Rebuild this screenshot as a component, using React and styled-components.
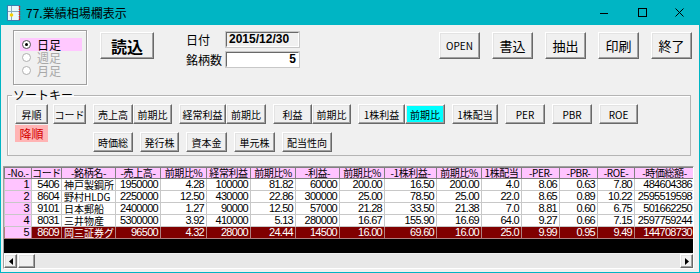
import React from "react";
import styled, { createGlobalStyle, css } from "styled-components";

const jp = `"Noto Sans CJK JP", sans-serif`;
const num = `"Liberation Sans Narrow", "Liberation Sans", "Noto Sans CJK JP", sans-serif`;
const teal = "#00b5c4";

const GlobalStyle = createGlobalStyle`
  body {
    margin: 0;
    font-family: ${jp};
    background: #f0f0f0;
  }
`;

const raised = css`
  border: 1px solid;
  border-color: #fff #696969 #696969 #fff;
  box-shadow: inset -1px -1px 0 #a0a0a0, inset 1px 1px 0 #e3e3e3;
  background: #f0f0f0;
`;

const Window = styled.div`
  width: 700px;
  height: 273px;
  box-sizing: border-box;
  border: 1px solid ${teal};
  border-top: none;
  display: flex;
  flex-direction: column;
  overflow: hidden;
`;

const TitleBar = styled.div`
  height: 25px;
  flex: none;
  background: ${teal};
  display: flex;
  align-items: center;
  padding-left: 6px;
  font-size: 12px;
  color: #000;
`;

const TitleText = styled.span`
  margin-left: 5px;
  line-height: 1;
`;

const Controls = styled.div`
  margin-left: auto;
  display: flex;
  height: 100%;
`;

const Ctrl = styled.div`
  width: 37.5px;
  display: flex;
  align-items: center;
  justify-content: center;
`;

const Body = styled.div`
  flex: 1;
  background: #f0f0f0;
  padding-top: 5px;
  display: flex;
  flex-direction: column;
  min-height: 0;
`;

const TopRow = styled.div`
  display: flex;
  align-items: flex-start;
  height: 55px;
  flex: none;
`;

const RadioGroup = styled.div`
  margin-left: 12px;
  width: 74px;
  height: 55px;
  box-sizing: border-box;
  border: 1px solid #a0a0a0;
  box-shadow: inset 1px 1px 0 #fff, 1px 1px 0 #fff;
  padding: 7px 0 0 6px;
`;

const RadioItem = styled.div`
  width: 62px;
  height: 13px;
  display: flex;
  align-items: center;
  font-size: 12px;
  line-height: 13px;
  color: ${(p) => (p.$on ? "#000" : "#a8a8a8")};
  background: ${(p) => (p.$on ? "#ffc8ff" : "transparent")};
`;

const Dot = styled.span`
  width: 7px;
  height: 7px;
  margin: 0 6px 0 2px;
  border-radius: 50%;
  border: 1px solid ${(p) => (p.$on ? "#555" : "#b0b0b0")};
  background: #fff;
  display: flex;
  align-items: center;
  justify-content: center;
  &::after {
    content: "";
    width: 3px;
    height: 3px;
    border-radius: 50%;
    background: ${(p) => (p.$on ? "#000" : "transparent")};
  }
`;

const Button = styled.button`
  ${raised};
  width: ${(p) => p.$w || 41}px;
  height: 27px;
  margin-top: 2px;
  padding: 0;
  font-family: ${jp};
  font-size: ${(p) => p.$fs || 12}px;
  font-weight: ${(p) => (p.$bold ? 700 : 400)};
  color: #000;
`;

const LoadBtn = styled(Button)`
  margin-left: 13px;
`;

const Info = styled.div`
  margin-left: 32px;
  margin-top: 2px;
  display: grid;
  grid-template-columns: 40px 73px;
  row-gap: 5px;
  align-items: center;
`;

const Label = styled.span`
  font-size: 12px;
  line-height: 14px;
`;

const Field = styled.div`
  height: 15px;
  box-sizing: border-box;
  border-top: 1px solid #696969;
  border-left: 1px solid #696969;
  border-right: 1px solid #fff;
  border-bottom: 1px solid #fff;
  outline: 1px solid #c8c8c8;
  background: ${(p) => (p.$white ? "#fff" : "#f0f0f0")};
  font-family: "Liberation Sans", sans-serif;
  font-weight: 700;
  font-size: 12px;
  line-height: 13px;
  padding: 0 2px;
  text-align: ${(p) => (p.$right ? "right" : "left")};
`;

const RightBtns = styled.div`
  margin-left: auto;
  margin-right: 7px;
  display: flex;
  gap: 12px;
`;

const SortGroup = styled.fieldset`
  margin: 3px 8px 0 6px;
  padding: 2px 7px 3px 7px;
  border: 1px solid #b4b4b4;
  box-shadow: 1px 1px 0 #fff inset;
  display: flex;
  gap: 5px;
  flex: none;
`;

const Legend = styled.legend`
  font-size: 12px;
  line-height: 14px;
  padding: 0 1px;
  margin-left: -3px;
`;

const OrderCol = styled.div`
  display: flex;
  flex-direction: column;
  gap: 1px;
`;

const KeyArea = styled.div`
  display: flex;
  flex-direction: column;
`;

const KeyRow = styled.div`
  display: flex;
  gap: 7px;
  margin-left: ${(p) => p.$indent || 0}px;
  margin-top: ${(p) => p.$top || 0}px;
`;

const Pair = styled.div`
  display: flex;
`;

const SortBtn = styled.button`
  ${raised};
  width: ${(p) => p.$w}px;
  height: 20px;
  padding: 0;
  font-family: ${jp};
  font-size: 10px;
  color: #000;
  white-space: nowrap;
  overflow: hidden;
  background: ${(p) => (p.$active ? "#00ffff" : "#f0f0f0")};
`;

const DescBtn = styled.div`
  width: 33px;
  height: 17px;
  background: #ffb4b4;
  color: #d40000;
  font-size: 12px;
  line-height: 17px;
  text-align: center;
`;

const GridBox = styled.div`
  margin: 10px 5px 3px 2px;
  flex: 1;
  min-height: 0;
  border: 1px solid #a0a0a0;
  border-right-color: #fff;
  border-bottom-color: #fff;
  display: flex;
  flex-direction: column;
`;

const TableWrap = styled.div`
  flex: 1;
  background: #000;
  overflow: hidden;
`;

const Table = styled.table`
  border-collapse: collapse;
  table-layout: fixed;
  width: 690px;
`;

const Th = styled.th`
  height: 10px;
  padding: 0;
  background: #ffc4ff;
  border: 1px solid #808080;
  font-family: ${jp};
  font-weight: 400;
  font-size: 10px;
  line-height: 10px;
  letter-spacing: -0.4px;
  white-space: nowrap;
  overflow: hidden;
  text-align: center;
`;

const Td = styled.td`
  height: 11px;
  padding: 0 2px;
  border: 1px solid ${(p) => (p.$sel ? "#b08080" : "#c8c8c8")};
  background: ${(p) => (p.$head ? "#ffc4ff" : p.$sel ? "#800000" : "#fff")};
  color: ${(p) => (p.$sel && !p.$head ? "#fff" : "#000")};
  font-family: ${(p) => (p.$name ? jp : num)};
  font-size: ${(p) => (p.$name ? 10 : 11)}px;
  letter-spacing: ${(p) => (p.$name ? 0 : -0.7)}px;
  line-height: 11px;
  text-align: ${(p) => (p.$name ? "left" : "right")};
  white-space: nowrap;
  overflow: hidden;
  text-overflow: clip;
`;

const ScrollBar = styled.div`
  height: 14px;
  flex: none;
  background: #e8e8e8;
  display: flex;
  align-items: stretch;
  border-top: 1px solid #f0f0f0;
`;

const ArrowBtn = styled.div`
  ${raised};
  width: 11px;
  display: flex;
  align-items: center;
  justify-content: center;
  margin-left: ${(p) => (p.$right ? "auto" : "0")};
`;

const Thumb = styled.div`
  ${raised};
  width: 15px;
  margin-left: 1px;
`;

const cols = [
  ["-No.-", 27],
  ["コード", 30],
  ["-銘柄名-", 54],
  ["-売上高-", 45],
  ["前期比%", 46],
  ["経常利益", 44],
  ["前期比%", 45],
  ["-利益-", 44],
  ["前期比%", 45],
  ["-1株利益-", 52],
  ["前期比%", 45],
  ["1株配当", 40],
  ["-PER-", 38],
  ["-PBR-", 38],
  ["-ROE-", 37],
  ["-時価総額-", 60],
];

const rows = [
  ["1", "5406", "神戸製鋼所", "1950000", "4.28", "100000", "81.82", "60000", "200.00", "16.50", "200.00", "4.0", "8.06", "0.63", "7.80", "484604386"],
  ["2", "8604", "野村HLDG", "2250000", "12.50", "430000", "22.86", "300000", "25.00", "78.50", "25.00", "22.0", "8.65", "0.89", "10.22", "2595519598"],
  ["3", "9101", "日本郵船", "2400000", "1.27", "90000", "12.50", "57000", "21.28", "33.50", "21.38", "7.0", "8.81", "0.60", "6.75", "501662250"],
  ["4", "8031", "三井物産", "5300000", "3.92", "410000", "5.13", "280000", "16.67", "155.90", "16.69", "64.0", "9.27", "0.66", "7.15", "2597759244"],
  ["5", "8609", "岡三証券グ", "96500", "4.32", "28000", "24.44", "14500", "16.00", "69.60", "16.00", "25.0", "9.99", "0.95", "9.49", "144708730"],
];

const AppIcon = () => (
  <svg width="14" height="16" viewBox="0 0 14 16">
    <rect x="0.5" y="0.5" width="12" height="15" fill="#e8f8fb" stroke="#3a7fb0" />
    <line x1="4.5" y1="1" x2="4.5" y2="15" stroke="#8ab" />
    <line x1="1" y1="6.5" x2="12" y2="6.5" stroke="#8ab" />
    <line x1="12.5" y1="1" x2="12.5" y2="15" stroke="#e02020" strokeDasharray="1.5 1" strokeWidth="1.5" />
    <circle cx="4.5" cy="10" r="1.8" fill="#f5d000" />
  </svg>
);

const Tri = ({ right }) => (
  <svg width="4" height="7" viewBox="0 0 4 7">
    <path d={right ? "M0 0 L4 3.5 L0 7 Z" : "M4 0 L0 3.5 L4 7 Z"} fill="#000" />
  </svg>
);

const App = () => {
  return (
    <>
      <GlobalStyle />
      <Window>
        <TitleBar>
          <AppIcon />
          <TitleText>77.業績相場欄表示</TitleText>
          <Controls>
            <Ctrl>
              <svg width="10" height="10" viewBox="0 0 10 10">
                <line x1="0" y1="5.5" x2="8" y2="5.5" stroke="#000" />
              </svg>
            </Ctrl>
            <Ctrl>
              <svg width="10" height="10" viewBox="0 0 10 10">
                <rect x="0.5" y="0.5" width="8" height="8" fill="none" stroke="#000" />
              </svg>
            </Ctrl>
            <Ctrl>
              <svg width="10" height="10" viewBox="0 0 10 10">
                <path d="M0.5 0.5 L8.5 8.5 M8.5 0.5 L0.5 8.5" stroke="#000" />
              </svg>
            </Ctrl>
          </Controls>
        </TitleBar>
        <Body>
          <TopRow>
            <RadioGroup>
              <RadioItem $on>
                <Dot $on />
                日足
              </RadioItem>
              <RadioItem>
                <Dot />
                週足
              </RadioItem>
              <RadioItem>
                <Dot />
                月足
              </RadioItem>
            </RadioGroup>
            <LoadBtn $w={54} $fs={16} $bold>
              読込
            </LoadBtn>
            <Info>
              <Label>日付</Label>
              <Field>2015/12/30</Field>
              <Label>銘柄数</Label>
              <Field $white $right>
                5
              </Field>
            </Info>
            <RightBtns>
              <Button $fs={10}>OPEN</Button>
              <Button $fs={13}>書込</Button>
              <Button $fs={13}>抽出</Button>
              <Button $fs={13}>印刷</Button>
              <Button $fs={13}>終了</Button>
            </RightBtns>
          </TopRow>

          <SortGroup>
            <Legend>ソートキー</Legend>
            <OrderCol>
              <SortBtn $w={33}>昇順</SortBtn>
              <DescBtn>降順</DescBtn>
            </OrderCol>
            <KeyArea>
              <KeyRow>
                <SortBtn $w={33}>コード</SortBtn>
                <Pair>
                  <SortBtn $w={40}>売上高</SortBtn>
                  <SortBtn $w={39}>前期比</SortBtn>
                </Pair>
                <Pair>
                  <SortBtn $w={47}>経常利益</SortBtn>
                  <SortBtn $w={40}>前期比</SortBtn>
                </Pair>
                <Pair>
                  <SortBtn $w={39}>利益</SortBtn>
                  <SortBtn $w={39}>前期比</SortBtn>
                </Pair>
                <Pair>
                  <SortBtn $w={47}>1株利益</SortBtn>
                  <SortBtn $w={40} $active>
                    前期比
                  </SortBtn>
                </Pair>
                <SortBtn $w={46}>1株配当</SortBtn>
                <SortBtn $w={40}>PER</SortBtn>
                <SortBtn $w={40}>PBR</SortBtn>
                <SortBtn $w={39}>ROE</SortBtn>
              </KeyRow>
              <KeyRow $indent={40} $top={8}>
                <SortBtn $w={40}>時価総</SortBtn>
                <SortBtn $w={39}>発行株</SortBtn>
                <SortBtn $w={41}>資本金</SortBtn>
                <SortBtn $w={41}>単元株</SortBtn>
                <SortBtn $w={50}>配当性向</SortBtn>
              </KeyRow>
            </KeyArea>
          </SortGroup>

          <GridBox>
            <TableWrap>
              <Table>
                <colgroup>
                  {cols.map(([h, w], i) => (
                    <col key={i} style={{ width: w }} />
                  ))}
                </colgroup>
                <thead>
                  <tr>
                    {cols.map(([h], i) => (
                      <Th key={i}>{h}</Th>
                    ))}
                  </tr>
                </thead>
                <tbody>
                  {rows.map((r, ri) => {
                    const sel = ri === rows.length - 1;
                    return (
                      <tr key={ri}>
                        {r.map((v, ci) => (
                          <Td key={ci} $head={ci === 0} $sel={sel} $name={ci === 2}>
                            {v}
                          </Td>
                        ))}
                      </tr>
                    );
                  })}
                </tbody>
              </Table>
            </TableWrap>
            <ScrollBar>
              <ArrowBtn>
                <Tri />
              </ArrowBtn>
              <Thumb />
              <ArrowBtn $right>
                <Tri right />
              </ArrowBtn>
            </ScrollBar>
          </GridBox>
        </Body>
      </Window>
    </>
  );
};

export default App;
